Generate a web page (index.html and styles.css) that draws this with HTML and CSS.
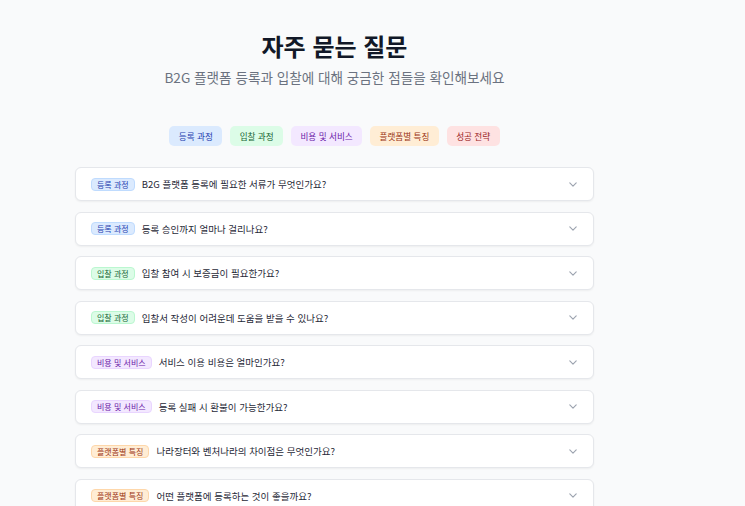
FILE: index.html
```html
<!DOCTYPE html>
<html lang="ko">
<head>
<meta charset="utf-8">
<link rel="stylesheet" href="styles.css">
</head>
<body>
<div class="page">
  <h1 class="title">자주 묻는 질문</h1>
  <p class="subtitle">B2G 플랫폼 등록과 입찰에 대해 궁금한 점들을 확인해보세요</p>
  <div class="filters">
    <span class="pill blue">등록 과정</span>
    <span class="pill green">입찰 과정</span>
    <span class="pill purple">비용 및 서비스</span>
    <span class="pill orange">플랫폼별 특징</span>
    <span class="pill red">성공 전략</span>
  </div>
  <div class="list">
    <div class="card"><span class="badge blue">등록 과정</span><span class="q">B2G 플랫폼 등록에 필요한 서류가 무엇인가요?</span><svg class="chev" viewBox="0 0 10 6"><path d="M1 1l4 4 4-4"/></svg></div>
    <div class="card"><span class="badge blue">등록 과정</span><span class="q">등록 승인까지 얼마나 걸리나요?</span><svg class="chev" viewBox="0 0 10 6"><path d="M1 1l4 4 4-4"/></svg></div>
    <div class="card"><span class="badge green">입찰 과정</span><span class="q">입찰 참여 시 보증금이 필요한가요?</span><svg class="chev" viewBox="0 0 10 6"><path d="M1 1l4 4 4-4"/></svg></div>
    <div class="card"><span class="badge green">입찰 과정</span><span class="q">입찰서 작성이 어려운데 도움을 받을 수 있나요?</span><svg class="chev" viewBox="0 0 10 6"><path d="M1 1l4 4 4-4"/></svg></div>
    <div class="card"><span class="badge purple">비용 및 서비스</span><span class="q">서비스 이용 비용은 얼마인가요?</span><svg class="chev" viewBox="0 0 10 6"><path d="M1 1l4 4 4-4"/></svg></div>
    <div class="card"><span class="badge purple">비용 및 서비스</span><span class="q">등록 실패 시 환불이 가능한가요?</span><svg class="chev" viewBox="0 0 10 6"><path d="M1 1l4 4 4-4"/></svg></div>
    <div class="card"><span class="badge orange">플랫폼별 특징</span><span class="q">나라장터와 벤처나라의 차이점은 무엇인가요?</span><svg class="chev" viewBox="0 0 10 6"><path d="M1 1l4 4 4-4"/></svg></div>
    <div class="card"><span class="badge orange">플랫폼별 특징</span><span class="q">어떤 플랫폼에 등록하는 것이 좋을까요?</span><svg class="chev" viewBox="0 0 10 6"><path d="M1 1l4 4 4-4"/></svg></div>
  </div>
</div>
</body>
</html>
```

FILE: styles.css
```css
html, body {
  margin: 0;
  padding: 0;
  background: #f9fafb;
  font-family: "Noto Sans CJK KR", "Noto Sans", sans-serif;
  overflow: hidden;
}
.page {
  width: 519px;
  margin: 0 0 0 75px;
  display: flex;
  flex-direction: column;
  align-items: center;
}
.title {
  margin: 31px 0 0;
  font-size: 24px;
  line-height: 30px;
  font-weight: 700;
  color: #111827;
}
.subtitle {
  margin: 7px 0 0;
  font-size: 13.6px;
  line-height: 18px;
  color: #6b7280;
}
.filters {
  margin-top: 40px;
  display: flex;
  gap: 8px;
}
.pill {
  height: 20px;
  padding: 0 9.4px;
  border-radius: 5px;
  font-size: 8.6px;
  line-height: 20px;
  display: inline-flex;
  align-items: center;
}
.blue { background: #dbeafe; color: #1e40af; }
.green { background: #dcfce7; color: #166534; }
.purple { background: #f3e8ff; color: #6b21a8; }
.orange { background: #ffedd5; color: #9a3412; }
.red { background: #fee2e2; color: #991b1b; }
.list {
  margin-top: 21px;
  width: 100%;
  display: flex;
  flex-direction: column;
  gap: 10.57px;
}
.card {
  box-sizing: border-box;
  height: 34px;
  background: #fff;
  border: 1px solid #e5e7eb;
  border-radius: 6px;
  box-shadow: 0 1px 2px rgba(0,0,0,0.05);
  display: flex;
  align-items: center;
  padding: 0 16px 0 15px;
}
.badge {
  height: 13px;
  padding: 0 5px;
  border-radius: 4px;
  font-size: 8px;
  line-height: 13px;
  margin-right: 7px;
  border: 1px solid transparent;
  box-sizing: border-box;
  display: inline-flex;
  align-items: center;
}
.badge.blue { border-color: #bfdbfe; }
.badge.green { border-color: #bbf7d0; }
.badge.purple { border-color: #e9d5ff; }
.badge.orange { border-color: #fed7aa; }
.q {
  flex: 1;
  font-size: 9.5px;
  color: #1f2937;
  font-weight: 400;
}
.chev {
  width: 8px;
  height: 5px;
  fill: none;
  stroke: #9ca3af;
  stroke-width: 1.4;
  stroke-linecap: round;
  stroke-linejoin: round;
}
```
